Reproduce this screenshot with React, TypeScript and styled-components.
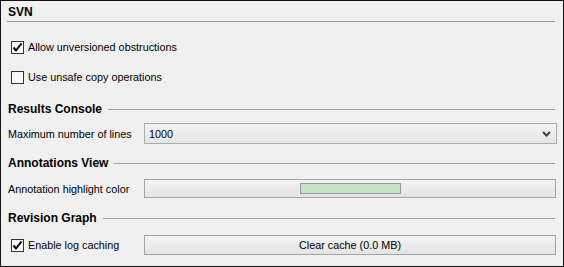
import React from "react";
import styled, { createGlobalStyle } from "styled-components";

const Global = createGlobalStyle`
  html, body { margin: 0; padding: 0; background: #f0f0f0; }
  * { box-sizing: border-box; }
`;

const Frame = styled.div`
  width: 564px;
  height: 267px;
  border: 1px solid #141414;
  background: #f0f0f0;
  padding: 0 8px 0 6px;
  display: flex;
  flex-direction: column;
  font-family: "Liberation Sans", Arial, sans-serif;
  font-size: 10.8px;
  color: #000;
`;

const TopHeader = styled.div`
  height: 21px;
  border-bottom: 1px solid #7f9db9;
  font-weight: bold;
  font-size: 12px;
  display: flex;
  align-items: center;
  padding-left: 1px;
  padding-top: 1px;
`;

const GroupHeader = styled.div<{ $mt: number }>`
  margin-top: ${(p) => p.$mt}px;
  height: 16px;
  display: flex;
  align-items: center;
  gap: 6px;
  font-weight: bold;
  font-size: 12px;
  padding-left: 1px;
  &::after {
    content: "";
    flex: 1;
    height: 1px;
    background: #a0a0a0;
  }
`;

const CheckRow = styled.label<{ $mt: number }>`
  margin-top: ${(p) => p.$mt}px;
  height: 20px;
  display: flex;
  align-items: center;
  padding-left: 4px;
  gap: 4px;
`;

const Box = styled.span`
  width: 13px;
  height: 13px;
  border: 1px solid #333;
  background: linear-gradient(#f4f4f4, #ffffff);
  display: flex;
  align-items: center;
  justify-content: center;
`;

const FieldRow = styled.div<{ $mt: number; $h: number }>`
  margin-top: ${(p) => p.$mt}px;
  height: ${(p) => p.$h}px;
  display: grid;
  grid-template-columns: 137px 1fr;
  align-items: center;
`;

const FieldLabel = styled.span`
  padding-left: 1px;
`;

const CheckCell = styled.span`
  display: flex;
  align-items: center;
  gap: 4px;
  padding-left: 4px;
`;

const Button = styled.div`
  height: 100%;
  border: 1px solid #a5a5a5;
  background: linear-gradient(#f3f3f3, #e4e4e4);
  display: flex;
  align-items: center;
  justify-content: center;
  margin-right: -1px;
`;

const Swatch = styled.span`
  width: 101px;
  height: 11px;
  background: #c8e2c8;
  border: 1px solid #8f9f8f;
`;

const Combo = styled.div`
  height: 100%;
  border: 1px solid #acacac;
  background: linear-gradient(#f3f3f3, #e6e6e6);
  display: flex;
  align-items: center;
  justify-content: space-between;
  padding: 0 5px 0 4px;
  margin-right: -2px;
`;

const Check = () => (
  <svg width="11" height="11" viewBox="0 0 11 11">
    <path d="M1.5 5.5 L4 8.5 L9.5 1.5" fill="none" stroke="#000" strokeWidth="2" />
  </svg>
);

const Chevron = () => (
  <svg width="9" height="6" viewBox="0 0 9 6">
    <path d="M1 1 L4.5 4.5 L8 1" fill="none" stroke="#444" strokeWidth="2" />
  </svg>
);

export default function App() {
  return (
    <>
      <Global />
      <Frame>
        <TopHeader>SVN</TopHeader>
        <CheckRow $mt={15}>
          <Box><Check /></Box>
          Allow unversioned obstructions
        </CheckRow>
        <CheckRow $mt={10}>
          <Box />
          Use unsafe copy operations
        </CheckRow>
        <GroupHeader $mt={14}>Results Console</GroupHeader>
        <FieldRow $mt={6} $h={21}>
          <FieldLabel>Maximum number of lines</FieldLabel>
          <Combo>
            <span>1000</span>
            <Chevron />
          </Combo>
        </FieldRow>
        <GroupHeader $mt={11}>Annotations View</GroupHeader>
        <FieldRow $mt={8} $h={19}>
          <FieldLabel>Annotation highlight color</FieldLabel>
          <Button>
            <Swatch />
          </Button>
        </FieldRow>
        <GroupHeader $mt={12}>Revision Graph</GroupHeader>
        <FieldRow $mt={9} $h={20}>
          <CheckCell>
            <Box><Check /></Box>
            Enable log caching
          </CheckCell>
          <Button>Clear cache (0.0 MB)</Button>
        </FieldRow>
      </Frame>
    </>
  );
}
